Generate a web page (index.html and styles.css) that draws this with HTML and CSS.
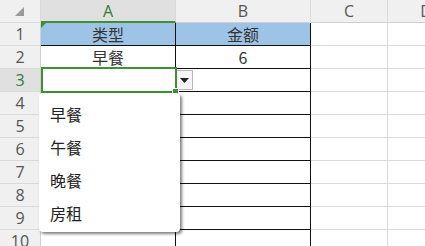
FILE: index.html
```html
<!DOCTYPE html>
<html lang="zh-CN">
<head>
  <meta charset="UTF-8">
  <meta name="viewport" content="width=device-width, initial-scale=1.0">
  <title>Sheet</title>
  <link rel="stylesheet" href="styles.css">
</head>
<body>
  <div class="sheet">
    <!-- шапка колонок -->
    <div class="corner">
      <svg width="9" height="9" viewBox="0 0 9 9"><polygon points="9,0 9,9 0,9" fill="#9a9a9a"/></svg>
    </div>
    <div class="col-head sel">A</div>
    <div class="col-head">B</div>
    <div class="col-head">C</div>
    <div class="col-head">D</div>

    <div class="row-head">1</div>
    <div class="cell t title first">类型</div>
    <div class="cell t title">金额</div>
    <div class="cell"></div>
    <div class="cell"></div>

    <div class="row-head">2</div>
    <div class="cell t">早餐</div>
    <div class="cell t">6</div>
    <div class="cell"></div>
    <div class="cell"></div>

    <div class="row-head sel">3</div>
    <div class="cell t active">
      <div class="drop-btn">
        <svg width="9" height="5" viewBox="0 0 9 5"><polygon points="0,0 9,0 4.5,5" fill="#222"/></svg>
      </div>
      <ul class="drop-list">
        <li>早餐</li>
        <li>午餐</li>
        <li>晚餐</li>
        <li>房租</li>
      </ul>
    </div>
    <div class="cell t"></div>
    <div class="cell"></div>
    <div class="cell"></div>

    <div class="row-head">4</div>
    <div class="cell t"></div>
    <div class="cell t"></div>
    <div class="cell"></div>
    <div class="cell"></div>

    <div class="row-head">5</div>
    <div class="cell t"></div>
    <div class="cell t"></div>
    <div class="cell"></div>
    <div class="cell"></div>

    <div class="row-head">6</div>
    <div class="cell t"></div>
    <div class="cell t"></div>
    <div class="cell"></div>
    <div class="cell"></div>

    <div class="row-head">7</div>
    <div class="cell t"></div>
    <div class="cell t"></div>
    <div class="cell"></div>
    <div class="cell"></div>

    <div class="row-head">8</div>
    <div class="cell t"></div>
    <div class="cell t"></div>
    <div class="cell"></div>
    <div class="cell"></div>

    <div class="row-head">9</div>
    <div class="cell t"></div>
    <div class="cell t"></div>
    <div class="cell"></div>
    <div class="cell"></div>

    <div class="row-head">10</div>
    <div class="cell t"></div>
    <div class="cell t"></div>
    <div class="cell"></div>
    <div class="cell"></div>
  </div>
</body>
</html>
```
FILE: styles.css
```css
body, html {
  margin: 0;
  padding: 0;
  background-color: white;
  overflow: hidden;
  font-family: 'Open Sans', 'Noto Sans', sans-serif;
}

.sheet {
  display: grid;
  grid-template-columns: 41px 135px 135px 77px 77px;
  grid-auto-rows: 23px;
  width: 465px;
}

.corner,
.col-head,
.row-head,
.cell {
  box-sizing: border-box;
  border-right: 1px solid #dadada;
  border-bottom: 1px solid #dadada;
}

.corner {
  background: #f0f0f0;
  display: flex;
  align-items: flex-end;
  justify-content: flex-end;
  padding: 0 16px 6px 0;
}

.col-head {
  background: #f0f0f0;
  color: #555;
  font-size: 16px;
  display: flex;
  align-items: center;
  justify-content: center;
  border-bottom-color: #d0d0d0;
}

.col-head.sel {
  background: #e0e0e0;
  color: #2f7d3a;
  border-bottom: 2px solid #3f8f34;
}

.row-head {
  background: #f0f0f0;
  color: #555;
  font-size: 16px;
  display: flex;
  align-items: center;
  justify-content: center;
  border-right-color: #d0d0d0;
}

.row-head.sel {
  background: #e0e0e0;
  color: #2f7d3a;
}

.cell {
  font-family: 'Noto Sans CJK SC', sans-serif;
  font-size: 16px;
  color: #333;
  display: flex;
  align-items: center;
  justify-content: center;
}

.cell.t {
  border-right-color: #111;
  border-bottom-color: #111;
}

.cell.title {
  background: #9dc3e6;
}

.cell.first {
  position: relative;
}

.cell.first::before {
  content: "";
  position: absolute;
  left: 0;
  top: 0;
  border-top: 5px solid #3f8f34;
  border-right: 5px solid transparent;
}

.cell.active {
  position: relative;
}

.cell.active::after {
  content: "";
  position: absolute;
  left: 0;
  top: -2px;
  right: -2px;
  bottom: -2px;
  border: 2px solid #3f8f34;
}

.cell.active::before {
  content: "";
  position: absolute;
  right: -4px;
  bottom: -4px;
  width: 5px;
  height: 5px;
  background: #3f8f34;
  border: 1px solid white;
  z-index: 2;
}

.drop-btn {
  position: absolute;
  left: 100%;
  top: 1px;
  width: 17px;
  height: 20px;
  box-sizing: border-box;
  margin-left: 1px;
  background: #f6f6f6;
  border: 1px solid #b8b8b8;
  display: flex;
  align-items: center;
  justify-content: center;
}

.drop-list {
  position: absolute;
  left: -2px;
  top: calc(100% + 2px);
  width: 141px;
  margin: 0;
  padding: 5px 0 2px;
  list-style: none;
  background: white;
  border-radius: 4px;
  box-shadow: 2px 2px 3px rgba(0, 0, 0, 0.5);
  z-index: 3;
}

.drop-list li {
  height: 33px;
  line-height: 33px;
  padding-left: 11px;
  font-family: 'Noto Sans CJK SC', sans-serif;
  font-size: 16px;
  color: #222;
  text-align: left;
}
```
